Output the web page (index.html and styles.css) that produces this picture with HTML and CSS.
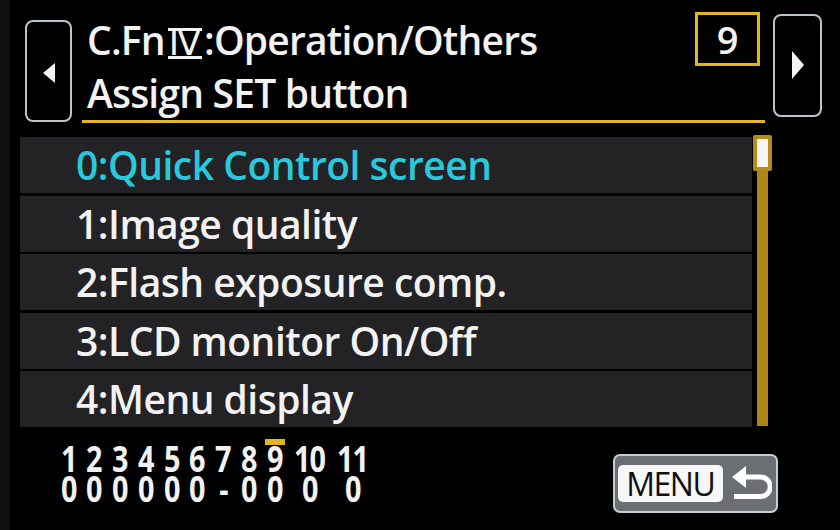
FILE: index.html
```html
<!DOCTYPE html>
<html lang="en">
<head>
  <meta charset="UTF-8" />
  <meta name="viewport" content="width=device-width, initial-scale=1.0" />
  <title>C.Fn IV – Assign SET button</title>
  <link rel="stylesheet" href="styles.css">
</head>
<body>
  <div class="screen">

    <!-- header: page arrows, title, page number -->
    <header class="header">
      <div class="nav-box"><span class="tri-left"></span></div>
      <div class="title-bar">
        <div class="title">
          <div>C.Fn<span class="roman">Ⅳ</span>:Operation/Others</div>
          <div>Assign SET button</div>
        </div>
        <div class="page-no">9</div>
      </div>
      <div class="nav-box right"><span class="tri-right"></span></div>
    </header>

    <!-- option list -->
    <section class="list-wrap">
      <ul class="options">
        <li class="selected">0:Quick Control screen</li>
        <li>1:Image quality</li>
        <li>2:Flash exposure comp.</li>
        <li>3:LCD monitor On/Off</li>
        <li>4:Menu display</li>
      </ul>
      <div class="scrollbar">
        <div class="thumb"></div>
        <div class="track"></div>
      </div>
    </section>

    <!-- footer: settings summary + MENU -->
    <footer class="footer">
      <div class="summary">
        <div class="col"><span>1</span><span>0</span></div>
        <div class="col"><span>2</span><span>0</span></div>
        <div class="col"><span>3</span><span>0</span></div>
        <div class="col"><span>4</span><span>0</span></div>
        <div class="col"><span>5</span><span>0</span></div>
        <div class="col"><span>6</span><span>0</span></div>
        <div class="col"><span>7</span><span>-</span></div>
        <div class="col"><span>8</span><span>0</span></div>
        <div class="col current"><span>9</span><span>0</span></div>
        <div class="col wide"><span>10</span><span>0</span></div>
        <div class="col wide last"><span>11</span><span>0</span></div>
      </div>

      <div class="menu-btn">
        <span class="menu-label">MENU</span>
        <svg class="back-icon" width="40" height="37" viewBox="0 0 40 37">
          <polygon points="0,12 14,1 14,23" fill="#fff"/>
          <path d="M12 12 H28.5 A9.75 9.75 0 0 1 28.5 31.5 H2" fill="none" stroke="#fff" stroke-width="5"/>
        </svg>
      </div>
    </footer>

  </div>
</body>
</html>
```

FILE: styles.css
```css
body {
  margin: 0;
  background: linear-gradient(to right, #0f0f10 10px, #000 10px);
  font-family: "Open Sans", "DejaVu Sans", sans-serif;
  color: #f2f2f2;
}
.screen {
  width: 840px;
  height: 530px;
  overflow: hidden;
}

/* header */
.header {
  display: flex;
  align-items: flex-start;
  padding: 12px 0 0 25px;
}
.nav-box {
  width: 43px;
  height: 98px;
  margin-top: 8px;
  border: 2px solid #b9c5cd;
  border-radius: 8px;
  display: flex;
  align-items: center;
  justify-content: center;
}
.nav-box.right {
  margin-top: 2px;
  margin-left: 8px;
  width: 45px;
  height: 99px;
}
.tri-left {
  width: 0;
  height: 0;
  border-top: 10px solid transparent;
  border-bottom: 10px solid transparent;
  border-right: 12px solid #f4f4f4;
  margin-top: 4px;
}
.tri-right {
  width: 0;
  height: 0;
  border-top: 14px solid transparent;
  border-bottom: 14px solid transparent;
  border-left: 12px solid #f4f4f4;
  margin-top: -2px;
}
.title-bar {
  width: 683px;
  margin-left: 10px;
  display: flex;
  align-items: flex-start;
  border-bottom: 3px solid #e2b622;
}
.title {
  padding: 1px 0 1px 5px;
  font-size: 39px;
  font-weight: 600;
  line-height: 53px;
  letter-spacing: -0.8px;
  white-space: nowrap;
}
/* roman numeral with the bars seen on the camera font */
.roman {
  display: inline-block;
  font-family: "DejaVu Sans", sans-serif;
  font-size: 35px;
  font-weight: 400;
  line-height: 25px;
  letter-spacing: 0;
  padding: 0 1px;
  margin: 0 2px 0 3px;
  border-top: 3px solid #f2f2f2;
  border-bottom: 3px solid #f2f2f2;
}
.page-no {
  margin-left: auto;
  margin-right: 5px;
  width: 59px;
  height: 48px;
  border: 3px solid #e2b622;
  font-size: 38px;
  font-weight: 600;
  line-height: 48px;
  text-align: center;
}

/* list */
.list-wrap {
  display: flex;
  margin-top: 14px;
  padding-left: 20px;
}
.options {
  list-style: none;
  margin: 0;
  padding: 0;
  width: 732px;
}
.options li {
  height: 56px;
  margin-bottom: 2.5px;
  padding-left: 56px;
  background: #232325;
  font-size: 39px;
  font-weight: 600;
  line-height: 56px;
  letter-spacing: -0.5px;
  white-space: nowrap;
}
.options li.selected {
  color: #29c8dc;
}
.scrollbar {
  width: 20px;
  display: flex;
  flex-direction: column;
  align-items: center;
}
.thumb {
  width: 11px;
  height: 28px;
  border: 4px solid #b38c1c;
  border-radius: 2px;
  background: #f5f5f5;
  margin-top: -2px;
}
.track {
  width: 11px;
  height: 255px;
  background: #ad861a;
}

/* footer */
.footer {
  display: flex;
  align-items: flex-start;
  padding: 8px 0 0 56px;
}
.summary {
  display: flex;
  font-size: 36px;
  font-weight: 700;
  line-height: 30px;
  padding-top: 6px;
}
.col {
  width: 25.75px;
  display: flex;
  flex-direction: column;
  align-items: center;
}
.col span {
  display: inline-block;
  transform: scaleX(0.8);
}
.col.wide {
  width: 44px;
  letter-spacing: -1px;
}
.col.last {
  width: 42px;
}
.col.current {
  position: relative;
}
.col.current::before {
  content: "";
  position: absolute;
  top: -5px;
  left: 3px;
  width: 20px;
  height: 6px;
  background: #e2b622;
}
.menu-btn {
  margin-left: 239px;
  margin-top: 16px;
  width: 161px;
  height: 55px;
  border: 2px solid #c6ced6;
  border-radius: 7px;
  background: #6b6e72;
  display: flex;
  align-items: center;
}
.menu-label {
  margin-left: 3px;
  width: 105px;
  height: 37px;
  border-radius: 5px;
  background: #f7f7f7;
  color: #111;
  font-size: 32px;
  line-height: 37px;
  letter-spacing: -1.5px;
  text-align: center;
}
.back-icon {
  margin-left: 9px;
}
```
